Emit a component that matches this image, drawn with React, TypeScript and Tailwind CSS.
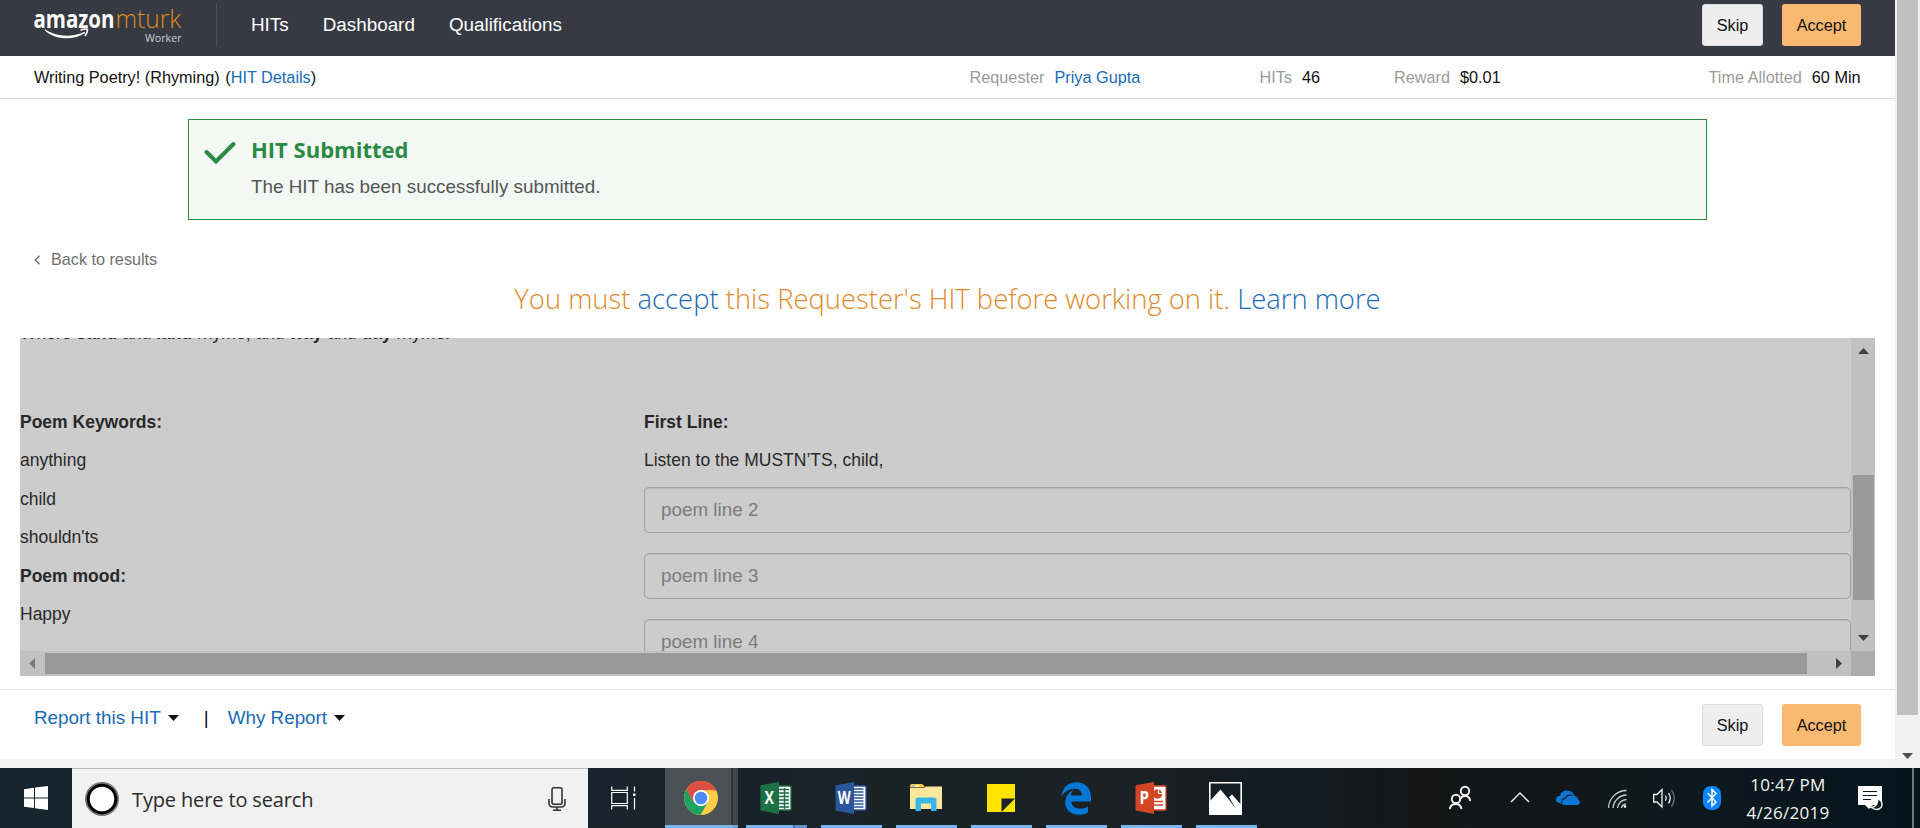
import type { ReactNode } from "react";

const ui = "font-['Liberation_Sans',Arial,sans-serif]";
const ember = "font-['Open_Sans','Noto_Sans',sans-serif]";

function Logo() {
  return (
    <svg width="160" height="56" viewBox="0 0 160 56" className={`block shrink-0 ${ember}`}>
      <text x="-0.500" y="28" fontSize="25.500" fontWeight="700" fill="#fff" textLength="81" lengthAdjust="spacingAndGlyphs">amazon</text>
      <text x="81.500" y="28" fontSize="26.500" fontWeight="300" fill="#dd8a1d" textLength="65.500" lengthAdjust="spacingAndGlyphs">mturk</text>
      <text x="111" y="42" fontSize="11.500" fill="#c9cbce" textLength="36.500" lengthAdjust="spacingAndGlyphs">Worker</text>
      <path d="M11 29.300C21 36.600 38 38 50.500 31.700L51.200 33C39 41 20 40 10.600 30Z" fill="#fff" />
      <path d="M46.500 30.200Q50 28.500 53.400 29.300Q53.800 32 51 36" fill="none" stroke="#fff" strokeWidth="1.600" />
    </svg>
  );
}

function ActionButtons() {
  return (
    <div className="flex gap-[19px] text-[16.25px] text-[#111]">
      <button className="h-[42px] w-[61px] rounded-[3px] border border-[#dcdcdc] bg-[#eee]">Skip</button>
      <button className="h-[42px] w-[79px] rounded-[3px] bg-[#fab970]">Accept</button>
    </div>
  );
}

function Header() {
  return (
    <header className="flex h-14 shrink-0 bg-[#373a43] pl-[34px] pr-[34px]">
      <Logo />
      <div className="ml-[22px] mt-[3px] h-11 w-px bg-[#4c4f58]" />
      <nav className="ml-[34px] flex h-[50px] flex-1 items-center gap-[34px] text-[18.85px] text-white">
        <a>HITs</a>
        <a>Dashboard</a>
        <a>Qualifications</a>
      </nav>
      <div className="pt-1">
        <ActionButtons />
      </div>
    </header>
  );
}

function Stat({ label, value, width, link }: { label: string; value: string; width: string; link?: boolean }) {
  return (
    <div className={`flex shrink-0 whitespace-pre ${width}`}>
      <span className="text-[#9b9b9b]">{label}</span>
      <span className={link ? "ml-[10px] text-[#1a6bb5]" : "ml-[10px] text-[#111]"}>{value}</span>
    </div>
  );
}

function DetailBar() {
  return (
    <div className="flex h-[43px] shrink-0 items-center border-b border-[#dcdcdc] pl-[34px] text-[16.25px] text-[#111]">
      <div className="w-[935.5px]">
        Writing Poetry! (Rhyming) <span className="ml-px">(</span>
        <a className="text-[#1a6bb5]">HIT Details</a>)
      </div>
      <Stat label="Requester" value="Priya Gupta" width="w-[290px]" link />
      <Stat label="HITs" value="46" width="w-[134.5px]" />
      <Stat label="Reward" value="$0.01" width="w-[314.5px]" />
      <Stat label="Time Allotted" value="60 Min" width="w-[170px]" />
    </div>
  );
}

function Alert() {
  return (
    <div className="mx-[188px] mt-5 flex h-[101px] shrink-0 border border-[#2c8a43] bg-[#f3f8f4]">
      <svg width="62" height="60" viewBox="0 0 62 60" className="shrink-0">
        <path d="M17.500 32L27 41.500L44.500 24" fill="none" stroke="#2a8a43" strokeWidth="4" strokeLinecap="round" strokeLinejoin="miter" />
      </svg>
      <div>
        <h2 className={`mt-[14px] h-[30px] text-[22px] leading-[30px] font-bold text-[#2a8a43] ${ember}`}>HIT Submitted</h2>
        <p className="mt-[10px] h-[26px] text-[18.85px] leading-[26px] text-[#555]">The HIT has been successfully submitted.</p>
      </div>
    </div>
  );
}

function LeftColumn() {
  const rows: [string, boolean][] = [
    ["Poem Keywords:", true],
    ["anything", false],
    ["child", false],
    ["shouldn'ts", false],
    ["Poem mood:", true],
    ["Happy", false],
  ];
  return (
    <div className="w-[624px] shrink-0">
      {rows.map(([text, bold]) => (
        <p key={text} className={bold ? "h-[38.5px] leading-[38.5px] font-bold" : "h-[38.5px] leading-[38.5px]"}>{text}</p>
      ))}
    </div>
  );
}

function PoemColumn() {
  return (
    <div className="w-[1207px] shrink-0">
      <p className="h-[38.5px] leading-[38.5px] font-bold">First Line:</p>
      <p className="h-[38.5px] leading-[38.5px]">Listen to the MUSTN’TS, child,</p>
      <div className="mt-[7.5px] flex flex-col gap-5">
        {[2, 3, 4].map((n) => (
          <div key={n} className="flex h-[46px] items-center rounded-[5px] border border-[#a2a2a2] pl-[16px] text-[18.85px] text-[#7c7c7c] shadow-[inset_0_1px_1px_rgba(0,0,0,0.08)]">
            {"poem line " + n}
          </div>
        ))}
      </div>
    </div>
  );
}

function Arrow({ points, w, h, fill }: { points: string; w: number; h: number; fill: string }) {
  return (
    <svg width={w} height={h} viewBox={`0 0 ${w} ${h}`} className="block shrink-0">
      <polygon points={points} fill={fill} />
    </svg>
  );
}

function TaskFrame() {
  return (
    <section className="mx-5 flex h-[338px] shrink-0 flex-col bg-[#ccc] text-[17.5px] text-[#292929]">
      <div className="flex h-[313px] shrink-0">
        <div className="h-[313px] w-[1831px] overflow-hidden">
          <p className="-mt-[18px] h-[26px] leading-[26px] whitespace-nowrap">
            Where <b>sand</b> and <b>land</b> rhyme, and <b>way</b> and <b>day</b> rhyme.
          </p>
          <div className="mt-[56.5px] flex">
            <LeftColumn />
            <PoemColumn />
          </div>
        </div>
        <div className="flex w-6 flex-col items-center bg-[#c1c1c1]">
          <div className="flex h-[137px] pt-[10px]">
            <Arrow points="0,6 5.5,0 11,6" w={11} h={6} fill="#404040" />
          </div>
          <div className="h-[125px] w-[21px] bg-[#9a9a9a]" />
          <div className="pt-[35px]">
            <Arrow points="0,0 11,0 5.5,6" w={11} h={6} fill="#404040" />
          </div>
        </div>
      </div>
      <div className="flex h-[25px] items-center bg-[#c1c1c1]">
        <div className="flex w-[25px] pl-[9px]">
          <Arrow points="6,0 6,11 0,5.500" w={6} h={11} fill="#7c7c7c" />
        </div>
        <div className="h-[21px] w-[1762px] bg-[#999]" />
        <div className="flex w-[44px] pl-[29px]">
          <Arrow points="0,0 6,5.500 0,11" w={6} h={11} fill="#404040" />
        </div>
        <div className="h-[25px] w-6 bg-[#adadad]" />
      </div>
    </section>
  );
}

function FooterBar() {
  return (
    <footer className="mt-[13px] flex h-[70px] shrink-0 justify-between border-t border-[#e1e1e1] pl-[34px] pr-[34px]">
      <div className="mt-[14px] flex h-7 items-center text-[18.85px] whitespace-nowrap text-[#1a6bb5]">
        <a>Report this HIT</a>
        <span className="ml-[7px]"><Arrow points="0,0 11,0 5.5,6" w={11} h={6} fill="#111" /></span>
        <span className="ml-[25px] text-[#111]">|</span>
        <a className="ml-[19px]">Why Report</a>
        <span className="ml-[7px]"><Arrow points="0,0 11,0 5.5,6" w={11} h={6} fill="#111" /></span>
      </div>
      <div className="pt-[14px]">
        <ActionButtons />
      </div>
    </footer>
  );
}

function AppCell({ children, split }: { children: ReactNode; split?: boolean }) {
  return (
    <div className="flex h-[60px] w-[75px] shrink-0 flex-col">
      <div className="flex h-[57px] items-center pt-[3px] pl-[14px]">{children}</div>
      <div className="flex h-[3px] w-[61px] bg-[#76b6f1]">
        {split && <div className="ml-auto h-[3px] w-[14px] border-l-2 border-[#466f96] bg-[#6093c1]" />}
      </div>
    </div>
  );
}

function OfficeIcon({ kind }: { kind: "X" | "W" | "P" }) {
  const dark = kind === "X" ? "#1e7145" : kind === "W" ? "#2a569b" : "#d24625";
  return (
    <svg width="32" height="34" viewBox="0 0 32 34" className={`shrink-0 ${ember}`}>
      <rect x="17" y="5" width="14" height="24" rx="1" fill="#fff" stroke={dark} strokeWidth="1.300" />
      {kind === "X" && (
        <path d="M19 8.500h10M19 12h10M19 15.500h10M19 19h10M19 22.500h10M19 26h10M24.500 7v21" stroke={dark} strokeWidth="1.500" />
      )}
      {kind === "W" && <path d="M19 8h9.500M19 11h9.500M19 14h9.500M19 17h9.500M19 20h9.500M19 23h9.500M19 26h9.500" stroke={dark} strokeWidth="1.500" />}
      {kind === "P" && (
        <>
          <circle cx="22.500" cy="13" r="4.700" fill="#d24625" />
          <path d="M23.500 12.500V7.500M23.500 12.500h5" stroke="#fff" strokeWidth="1.200" />
          <path d="M19 20.500h9M19 24h9" stroke="#d24625" strokeWidth="1.500" />
        </>
      )}
      <path d="M0.500 4.300L19 1v32L0.500 29.500Z" fill={dark} />
      <text x="9.300" y="23" fontSize="17" fontWeight="700" textAnchor="middle" fill="#fff" textLength={kind === "W" ? 13 : 9.5} lengthAdjust="spacingAndGlyphs">
        {kind}
      </text>
    </svg>
  );
}

function ChromeIcon() {
  return (
    <svg width="34" height="34" viewBox="0 0 34 34">
      <circle cx="17" cy="17" r="17" fill="#ffcd46" />
      <path d="M17 17L2.300 8.500A17 17 0 0 0 16.500 34L24 21Z" fill="#1da462" />
      <path d="M17 17L9.500 21.500L2.300 8.500A17 17 0 0 1 32.300 9.300H17Z" fill="#dd5144" />
      <circle cx="17" cy="17" r="8" fill="#fff" />
      <circle cx="17" cy="17" r="6.300" fill="#4c8bf5" />
    </svg>
  );
}

function FolderIcon() {
  return (
    <svg width="32" height="28" viewBox="0 0 32 28">
      <path d="M0 2q0-2 2-2h10q1.500 0 3 3.500H0Z" fill="#ffc83d" />
      <path d="M2.500 2h7" stroke="#fff" strokeWidth="1.200" />
      <path d="M2.500 2h2" stroke="#2aa8dc" strokeWidth="1.200" />
      <path d="M0 4h14l2-1.500h16V25H0Z" fill="#ffe79b" />
      <path d="M5.500 27V16q0-2.500 2.500-2.500h16q2.500 0 2.500 2.500v11h-5.500v-7.500H11V27Z" fill="#38b6e8" />
    </svg>
  );
}

function NotesIcon() {
  return (
    <svg width="28" height="28" viewBox="0 0 28 28" className="ml-[2px]">
      <path d="M0 0h28v28H0Z" fill="#ffe400" />
      <path d="M14.500 14.500H28L14.500 28Z" fill="#1b2328" />
    </svg>
  );
}

function EdgeIcon() {
  return (
    <svg width="30" height="33" viewBox="0 0 30 33" className="ml-px">
      <path d="M0.300 14.500C1.500 5.500 7.500 0.300 15.300 0.300C24.500 0.300 30 6.500 30 15V19.500H10.300C10.700 24.500 14.500 26.700 19.700 26.700C23 26.700 25.700 25.700 27 24.300V30.500C25 31.900 21.500 32.800 17.700 32.800C9.500 32.800 4.200 27.600 4.200 20.300C4.200 14.700 7.400 10.300 12.600 7.700C10.900 9.500 10.200 11.500 10 13.500H20.900C20.800 9.200 18.300 6.700 13.600 6.700C8.300 6.700 3.500 9.500 0.300 14.500Z" fill="#0078d7" />
    </svg>
  );
}

function PhotosIcon() {
  return (
    <svg width="33" height="33" viewBox="0 0 33 33" className="-ml-px">
      <path d="M0.800 0.800h31.400v31.400H0.800Z" fill="none" stroke="#fff" strokeWidth="1.600" />
      <path d="M1 19L11.500 7.500L21 19L27 27L20 15L23 12.500L32 22.500V32H1Z" fill="#fff" />
    </svg>
  );
}

function Tray() {
  return (
    <svg width="272" height="60" viewBox="1449 768 272 60" className="shrink-0" fill="none" stroke="#f4f4f4">
      <g strokeWidth="1.900">
        <circle cx="1465" cy="791" r="4.200" />
        <path d="M1460.500 799Q1461.500 796 1465 796Q1469.500 796 1470.300 801" />
        <circle cx="1456" cy="799" r="4.200" />
        <path d="M1449.800 809Q1450.500 804 1456 804Q1460.500 804 1461.500 809" />
      </g>
      <path d="M1511 802L1520 793L1529 802" strokeWidth="1.400" />
      <path d="M1560 803Q1556 803 1556 799.500Q1556 796 1560 796Q1561 791 1566 790.500Q1571 790 1573.500 794Q1574.500 795.500 1574.500 796Q1578 797 1578 799.500Q1580 800.500 1580 802.500Q1579.500 805 1577 805H1565Q1561.500 805 1560 803Z" fill="#0a78d4" stroke="none" />
      <path d="M1562 803.500Q1561 799 1565.500 798Q1568 793.800 1572.500 795.500" stroke="#10191e" strokeWidth="1.200" />
      <g strokeWidth="1.300" stroke="#c8cccf">
        <path d="M1608.500 808A18 18 0 0 1 1626.500 790.500" />
        <path d="M1613 808A14 14 0 0 1 1626.500 795" />
        <path d="M1617.500 808A9.500 9.500 0 0 1 1626.500 799.500" />
        <path d="M1621.500 808A5 5 0 0 1 1626 804" />
        <circle cx="1625" cy="806.500" r="1.300" fill="#fff" stroke="none" />
      </g>
      <path d="M1653.700 794.500H1657L1662 789.500V807L1657 802H1653.700Z" strokeWidth="1.300" />
      <path d="M1665.500 795.500Q1667 798 1665.500 800.800M1668.500 793Q1672 798 1668.500 803.500" strokeWidth="1.300" />
      <path d="M1671.500 790Q1677 798 1671.500 806.500" strokeWidth="1.300" stroke="#6d767b" />
      <rect x="1703" y="786" width="18" height="24" rx="8" fill="#0a84ff" stroke="none" />
      <path d="M1707.500 793L1716 802L1712 806V789.500L1716 793.500L1707.500 802.500" strokeWidth="1.500" stroke="#fff" />
    </svg>
  );
}

function Taskbar() {
  return (
    <div className={`flex h-[60px] shrink-0 bg-[linear-gradient(90deg,#16242e_0%,#18232a_35%,#1a2225_58%,#111a22_68%,#161616_74%,#0c191f_88%,#06141c_100%)] ${ember}`}>
      <div className="flex w-[72px] items-center justify-center">
        <svg width="24" height="24" viewBox="0 0 24 24" fill="#fff">
          <path d="M0 3.200L10 1.700V11.400H0ZM11 1.500L24 0V11.400H11ZM0 12.500H10V22L0 20.700ZM11 12.500H24V24L11 22.300Z" />
        </svg>
      </div>
      <div className="flex w-[516px] items-center border-t border-[#b9bbbd] bg-[#f1f1f1]">
        <svg width="34" height="34" viewBox="0 0 34 34" className="ml-[13px]">
          <circle cx="17" cy="17" r="16" fill="none" stroke="#777" strokeWidth="2" />
          <circle cx="17" cy="17" r="13.800" fill="#fff" stroke="#000" strokeWidth="3" />
        </svg>
        <span className="ml-[13px] w-[416px] pt-[2px] text-[20px] tracking-[-0.14px] text-[#2b2b2b]">Type here to search</span>
        <svg width="18" height="24" viewBox="0 0 18 24" fill="none" stroke="#333" strokeWidth="1.600">
          <rect x="4" y="0.800" width="10" height="16.500" rx="2" />
          <path d="M1 12v4q0 4 4 4h8q4 0 4-4v-4M9 20v3M5 23.200h8" />
        </svg>
      </div>
      <div className="flex w-[77px] items-center pl-[23px]">
        <svg width="25" height="24" viewBox="0 0 25 24" fill="none" stroke="#fff" strokeWidth="1.200">
          <path d="M0.700 0.500V4.300H16.300V0.500M0.700 23.500V19.700H16.300V23.500M0.700 6.500H16.300V17.500H0.700ZM23.500 0.500V5.500M23.500 12V23.500" />
          <rect x="22" y="7.500" width="2.500" height="2.500" fill="#fff" stroke="none" />
        </svg>
      </div>
      <div className="mr-2 flex h-[60px] w-[73px] shrink-0 flex-col">
        <div className="flex h-[57px]">
          <div className="flex w-[66px] items-center bg-[#4a5255] pt-[3px] pl-[19px]">
            <ChromeIcon />
          </div>
          <div className="w-[2px] bg-[#2c3236]" />
          <div className="w-[5px] bg-[#3f474a]" />
        </div>
        <div className="flex h-[3px] bg-[#76b6f1]">
          <div className="ml-auto w-[5px] bg-[#6aa3d8]" />
        </div>
      </div>
      <AppCell split><OfficeIcon kind="X" /></AppCell>
      <AppCell><OfficeIcon kind="W" /></AppCell>
      <AppCell><FolderIcon /></AppCell>
      <AppCell><NotesIcon /></AppCell>
      <AppCell><EdgeIcon /></AppCell>
      <AppCell><OfficeIcon kind="P" /></AppCell>
      <AppCell><PhotosIcon /></AppCell>
      <div className="flex-1" />
      <Tray />
      <div className="flex w-[134px] shrink-0 flex-col items-center pt-[3px] text-[17px] tracking-[0.25px] text-[#f4f4f4]">
        <span className="h-[28px] leading-[27px]">10:47 PM</span>
        <span className="h-[28px] leading-[27px]">4/26/2019</span>
      </div>
      <div className="flex w-[57px] shrink-0 items-center pl-[3px]">
        <svg width="25" height="25" viewBox="0 0 25 25">
          <path d="M0 0H24V19H15L11 23L7 19H0Z" fill="#fff" />
          <path d="M5 5.500H19M5 9.500H19M5 13.500H13" stroke="#08161e" strokeWidth="1.200" />
          <path d="M20 12.500Q26 16.500 23 21.500Q19 25.500 13.500 21.500Q20 20.500 20 12.500Z" fill="#08161e" stroke="#fff" strokeWidth="1.400" />
        </svg>
      </div>
      <div className="w-[2px] shrink-0 bg-[#6f777b]" />
      <div className="w-[6px] shrink-0" />
    </div>
  );
}

export default function App() {
  return (
    <div className={`flex h-[828px] w-[1920px] flex-col overflow-hidden bg-white ${ui}`}>
      <div className="flex h-[768px] shrink-0">
        <main className="flex w-[1895px] shrink-0 flex-col">
          <Header />
          <DetailBar />
          <Alert />
          <div className="mt-[26px] flex h-[27px] shrink-0 items-center pl-[34px] text-[16.2px] text-[#6f6f6f]">
            <svg width="7" height="10" viewBox="0 0 7 10" fill="none" stroke="#6f6f6f" strokeWidth="1.400">
              <path d="M5.500 0.800L1.200 5L5.500 9.200" />
            </svg>
            <a className="ml-[10px]">Back to results</a>
          </div>
          <h1 className={`mt-[6px] h-[59px] shrink-0 text-center text-[27.4px] leading-[40px] font-light text-[#dd8b2c] ${ember}`}>
            You must <a className="text-[#1a6bb5]">accept</a> this Requester's HIT before working on it. <a className="text-[#1a6bb5]">Learn more</a>
          </h1>
          <TaskFrame />
          <FooterBar />
          <div className="flex-1 bg-[#f3f3f3]" />
        </main>
        <div className="flex w-[25px] shrink-0 flex-col items-center bg-[#f1f1f1]">
          <div className="h-[715px] w-[21px] shrink-0 bg-[#c1c1c1]" />
          <div className="pt-[38px]">
            <Arrow points="0,0 11,0 5.5,6" w={11} h={6} fill="#505050" />
          </div>
        </div>
      </div>
      <Taskbar />
    </div>
  );
}
